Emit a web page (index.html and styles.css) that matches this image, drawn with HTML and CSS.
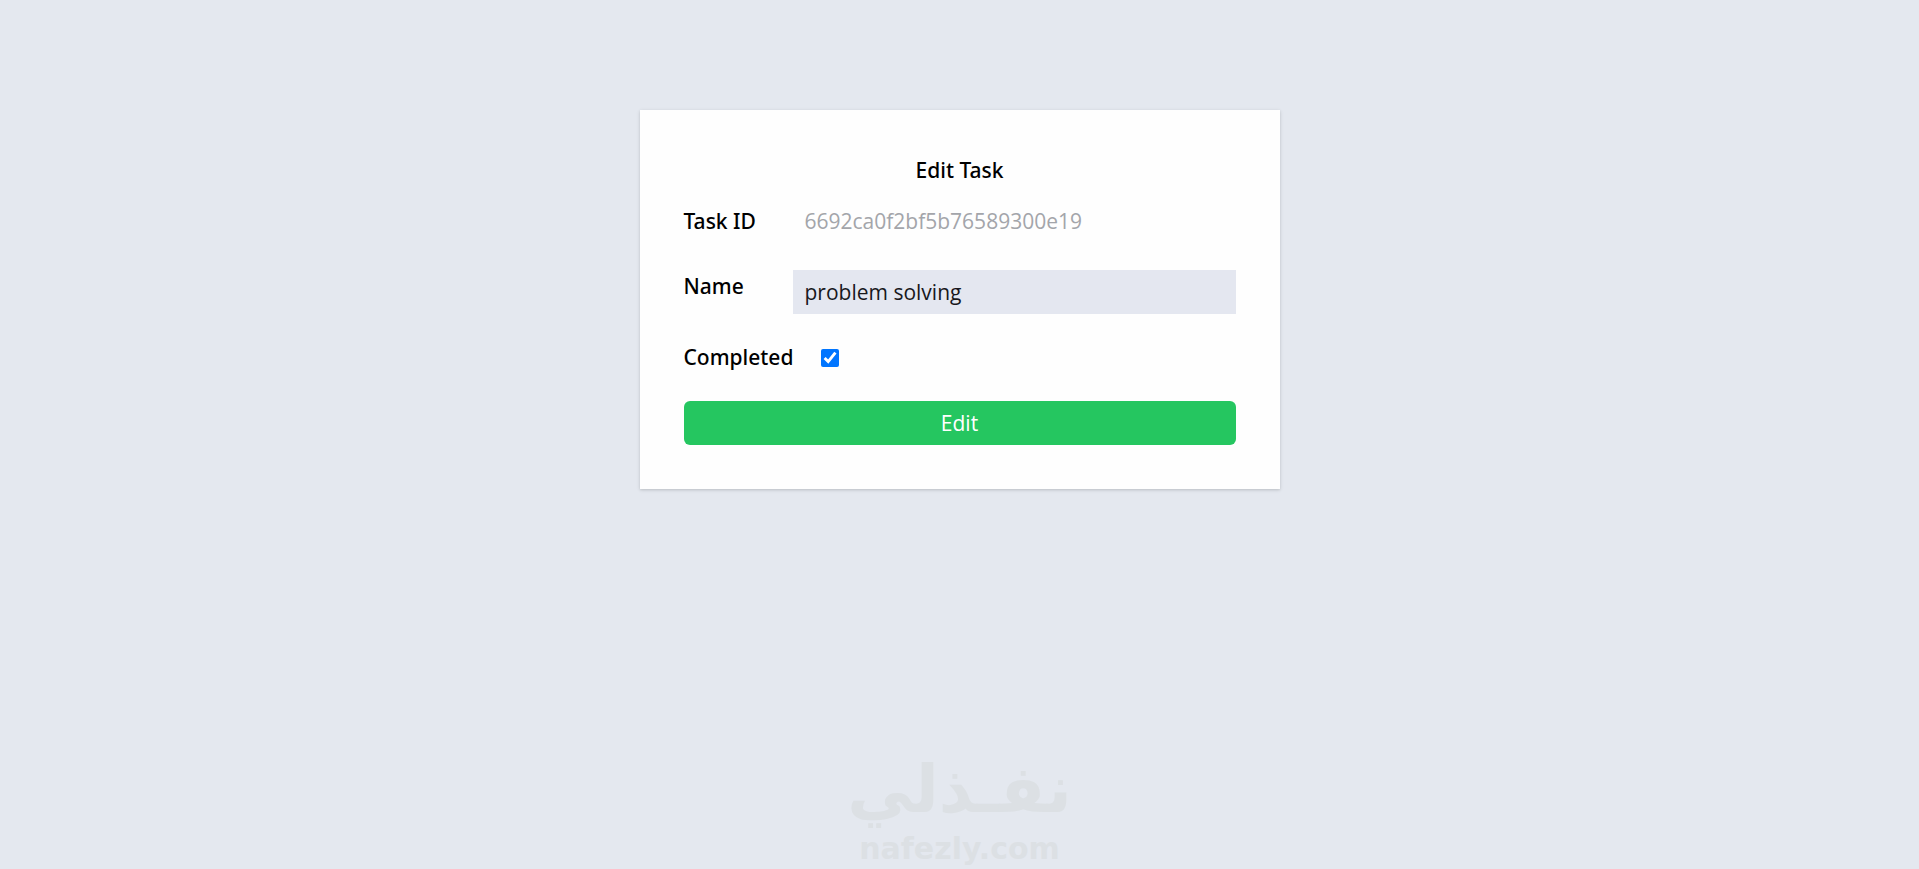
FILE: index.html
```html
<!DOCTYPE html>
<html lang="en">
<head>
<meta charset="utf-8">
<meta name="viewport" content="width=device-width, initial-scale=1">
<title>Edit Task</title>
<link rel="stylesheet" href="styles.css">
</head>
<body>
<main class="card">
  <h1 class="title">Edit Task</h1>
  <form class="form">
    <div class="row row-id">
      <span class="label">Task ID</span>
      <span class="task-id">6692ca0f2bf5b76589300e19</span>
    </div>
    <div class="row">
      <label class="label" for="name">Name</label>
      <input class="field" id="name" type="text" value="problem solving">
    </div>
    <div class="row row-check">
      <label class="label" for="completed">Completed</label>
      <input class="check" id="completed" type="checkbox" checked>
    </div>
    <button class="submit" type="button">Edit</button>
  </form>
</main>
<footer class="watermark">
  <span class="mark-ar" lang="ar" dir="rtl">نفـذلي</span>
  <span class="mark-en">nafezly.com</span>
</footer>
</body>
</html>
```
FILE: styles.css
```css
* {
  box-sizing: border-box;
}

body {
  margin: 0;
  padding: 110px 16px 0;
  min-height: 100vh;
  background: #e4e8ef;
  color: #000;
  font: 21px/33px "Segoe UI", "Open Sans", sans-serif;
}

.card {
  max-width: 640px;
  margin: 0 auto;
  padding: 44px;
  background: #fefefe;
  box-shadow: 0 1px 4px rgba(0, 0, 0, 0.12), 0 1px 2px rgba(0, 0, 0, 0.08);
}

.title,
.label {
  font-family: "Segoe UI", "Noto Sans", "Open Sans", sans-serif;
  font-size: 21px;
  font-weight: 500;
  line-height: 33px;
}

.title {
  margin: 0 0 12px;
  text-align: center;
}

.form {
  display: flex;
  flex-direction: column;
  gap: 27px;
}

.row {
  display: grid;
  grid-template-columns: 109px 1fr;
  align-items: start;
}

.row-id,
.row-check {
  align-items: center;
}

.task-id {
  padding: 6px 12px 5px;
  color: #a3a5aa;
}

.field {
  width: 100%;
  height: 44px;
  padding: 0 12px;
  border: 0;
  background: #e4e7f0;
  color: #18181c;
  font: inherit;
}

.check {
  width: 18px;
  height: 18px;
  margin: 0 0 0 28px;
  accent-color: #0075ff;
}

.submit {
  height: 44px;
  padding: 0;
  border: 0;
  border-radius: 6px;
  background: #25c660;
  color: #fff;
  font: inherit;
  cursor: pointer;
}

.watermark {
  position: absolute;
  bottom: 0;
  left: 50%;
  display: flex;
  flex-direction: column;
  align-items: center;
  color: #dce0e4;
  font-weight: 700;
  white-space: nowrap;
  transform: translateX(-50%);
  pointer-events: none;
}

.mark-ar {
  font-family: "DejaVu Sans", sans-serif;
  font-size: 66px;
  line-height: 78px;
}

.mark-en {
  font-family: "DejaVu Sans", sans-serif;
  font-size: 30px;
  line-height: 40px;
}
```
